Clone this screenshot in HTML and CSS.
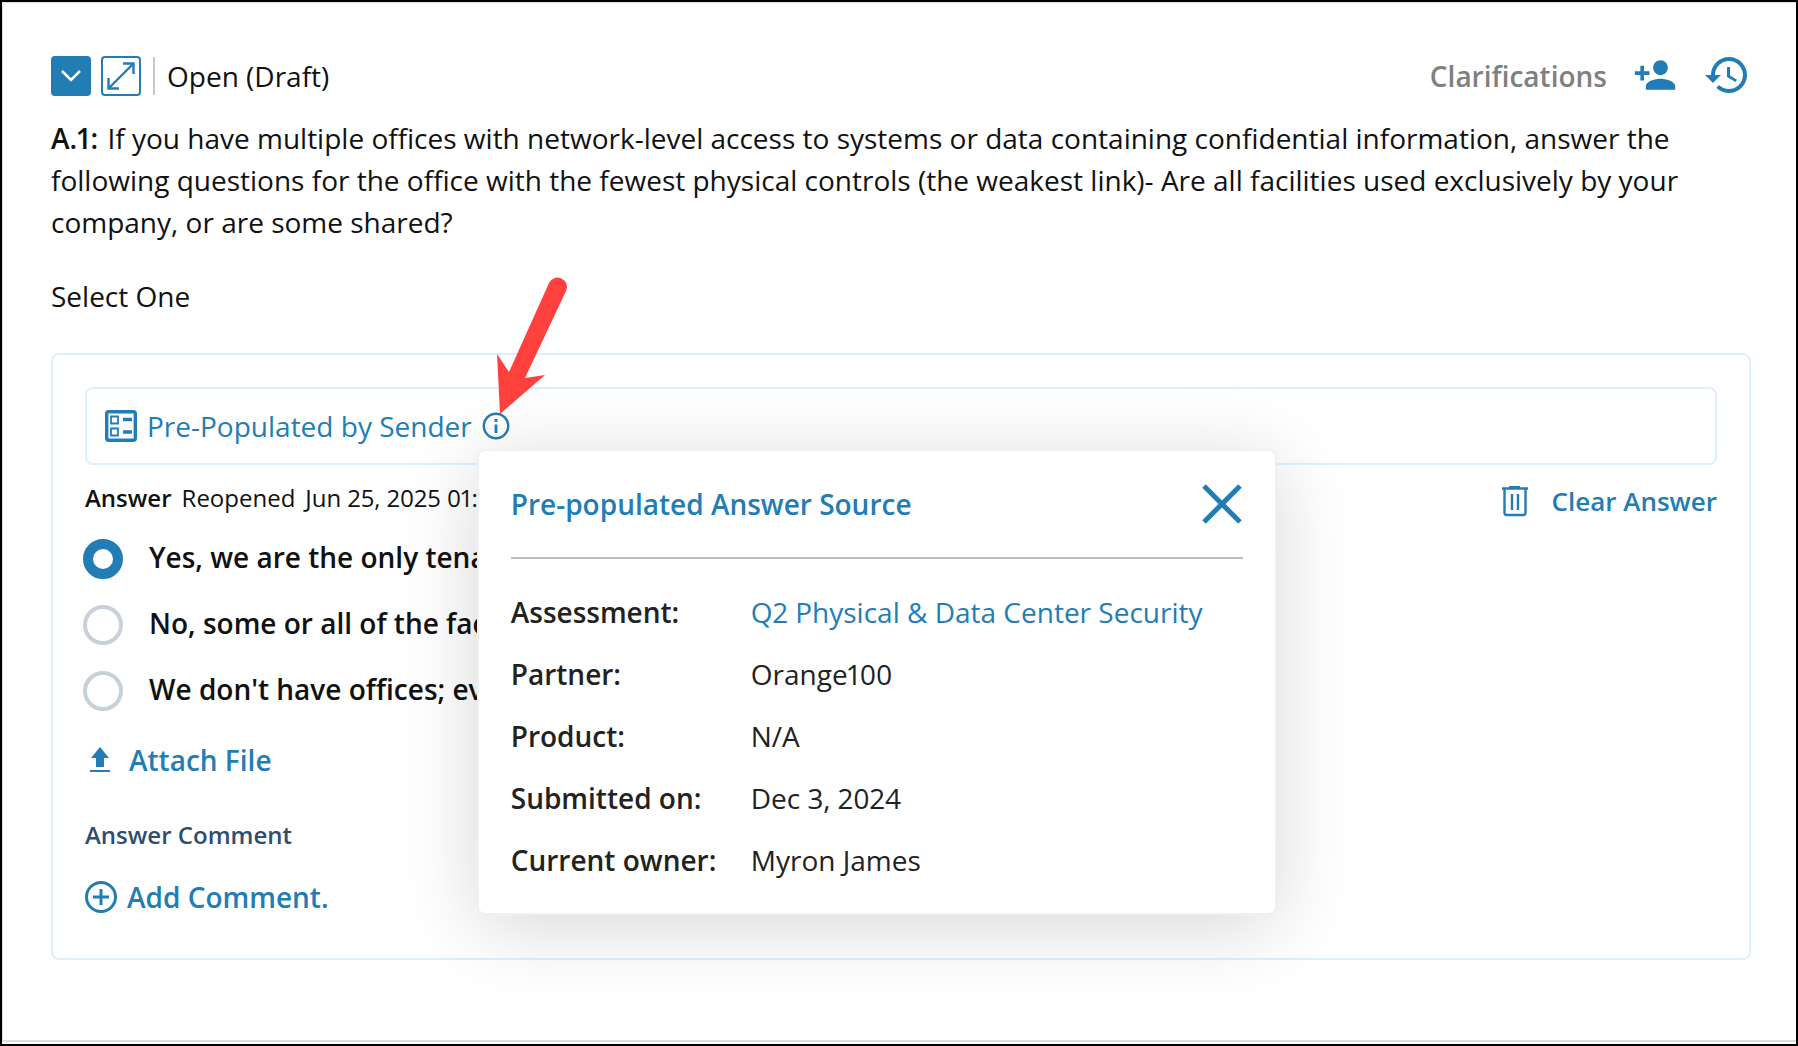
FILE: index.html
```html
<!DOCTYPE html>
<html lang="en">
<head>
    <meta charset="UTF-8">
    <meta name="viewport" content="width=device-width, initial-scale=1.0">
    <title>Assessment Question</title>
    <link rel="stylesheet" href="styles.css">
</head>
<body>
    <main class="card">
        <header class="header">
            <button class="square filled" aria-label="Collapse">
                <svg width="20" height="12" viewBox="0 0 20 12"><path d="M1 1l9 9 9-9" fill="none" stroke="currentColor" stroke-width="2.500"/></svg>
            </button>
            <button class="square" aria-label="Expand">
                <svg width="28" height="28" viewBox="0 0 28 28"><path d="M1.500 26.500L26.500 1.500M16 1.500h10.500v10.500M1.500 16v10.500H12" fill="none" stroke="currentColor" stroke-width="2.400"/></svg>
            </button>
            <span class="divider"></span>
            <span class="status">Open (Draft)</span>
            <a href="#" class="clarifications">Clarifications</a>
            <button class="icon-button" aria-label="Add person">
                <svg width="44" height="44" viewBox="0 0 24 24"><path fill="currentColor" d="M15 12c2.210 0 4-1.790 4-4s-1.790-4-4-4-4 1.790-4 4 1.790 4 4 4zm-9-2V7H4v3H1v2h3v3h2v-3h3v-2H6zm9 4c-2.670 0-8 1.340-8 4v2h16v-2c0-2.660-5.330-4-8-4z"/></svg>
            </button>
            <button class="icon-button" aria-label="History">
                <svg width="48" height="48" viewBox="0 0 24 24"><path fill="currentColor" d="M13 3c-4.970 0-9 4.030-9 9H1l3.890 3.890.07.14L9 12H6c0-3.870 3.130-7 7-7s7 3.130 7 7-3.130 7-7 7c-1.930 0-3.680-.79-4.940-2.060l-1.420 1.420C8.270 19.990 10.510 21 13 21c4.970 0 9-4.030 9-9s-4.030-9-9-9zm-1 5v5l4.280 2.540.72-1.210-3.500-2.080V8H12z"/></svg>
            </button>
        </header>

        <p class="question"><b>A.1:</b> If you have multiple offices with network-level access to systems or data containing confidential information, answer the following questions for the office with the fewest physical controls (the weakest link)- Are all facilities used exclusively by your company, or are some shared?</p>
        <p class="hint">Select One</p>

        <section class="answer-box">
            <div class="source">
                <svg width="32" height="32" viewBox="0 0 32 32">
                    <rect x="1.700" y="1.700" width="28.600" height="28.600" rx="2" fill="none" stroke="currentColor" stroke-width="3.400"/>
                    <path d="M6 6.500h7v7H6zM6 18.500h7v7H6z" fill="none" stroke="currentColor" stroke-width="1.800"/>
                    <path d="M18 9.500h9M18 22h9" stroke="currentColor" stroke-width="3.400"/>
                </svg>
                <span>Pre-Populated by Sender</span>
                <div class="info">
                    <button class="icon-button" aria-label="Answer source info">
                        <svg width="28" height="28" viewBox="0 0 28 28"><circle cx="14" cy="14" r="12.200" fill="none" stroke="currentColor" stroke-width="2.400"/><path d="M14 7v3M14 12.500v8.500" stroke="currentColor" stroke-width="2.800"/></svg>
                    </button>
                    <svg class="pointer" width="72" height="138" viewBox="0 0 72 138"><path d="M4 137L1 77l12 18L53 6a9 9 0 0 1 17 8L29 101l20-3z" fill="#ff413d"/></svg>

                    <div class="popup" role="dialog" aria-labelledby="popup-title">
                        <div class="popup-head">
                            <h2 id="popup-title">Pre-populated Answer Source</h2>
                            <button class="icon-button" aria-label="Close">
                                <svg width="42" height="42" viewBox="0 0 42 42"><path d="M3 3l36 36M39 3L3 39" stroke="currentColor" stroke-width="5"/></svg>
                            </button>
                        </div>
                        <dl>
                            <dt>Assessment:</dt><dd><a href="#">Q2 Physical &amp; Data Center Security</a></dd>
                            <dt>Partner:</dt><dd>Orange100</dd>
                            <dt>Product:</dt><dd>N/A</dd>
                            <dt>Submitted on:</dt><dd>Dec 3, 2024</dd>
                            <dt>Current owner:</dt><dd>Myron James</dd>
                        </dl>
                    </div>
                </div>
            </div>

            <div class="answer-row">
                <p class="answer-meta"><b>Answer</b><span>Reopened</span><span>Jun 25, 2025 01:15</span></p>
                <button class="link-button clear">
                    <svg width="28" height="32" viewBox="0 0 28 32"><path d="M8 1h11v2H8z" fill="currentColor"/><path d="M1 3.500h26M3.500 3.500v24q0 2.500 2 2.500h17q2 0 2-2.500v-24M11 9v16M17 9v16" fill="none" stroke="currentColor" stroke-width="2.400"/></svg>
                    Clear Answer
                </button>
            </div>

            <div class="options" role="radiogroup" aria-label="Select One">
                <label><input type="radio" name="tenancy" checked> Yes, we are the only tenant</label>
                <label><input type="radio" name="tenancy"> No, some or all of the facilities are shared</label>
                <label><input type="radio" name="tenancy"> We don't have offices; everyone is remote</label>
            </div>

            <button class="link-button attach">
                <svg width="20" height="26" viewBox="0 0 20 26"><path d="M10 0l9 11h-5v9H6v-9H1zM0 23h20v2H0z" fill="currentColor"/></svg>
                Attach File
            </button>

            <h3>Answer Comment</h3>
            <button class="link-button comment">
                <svg width="32" height="32" viewBox="0 0 32 32"><path d="M16 8v16M8 16h16" stroke="currentColor" stroke-width="3"/><circle cx="16" cy="16" r="14.500" fill="none" stroke="currentColor" stroke-width="3"/></svg>
                Add Comment.
            </button>
        </section>
    </main>
</body>
</html>
```

FILE: styles.css
```css
* { box-sizing: border-box; }
body {
    margin: 0;
    min-height: 100vh;
    display: flex;
    border: 2px solid #000;
    background: #fff;
    color: #111;
    font: 28px/42px "Open Sans", "Noto Sans", sans-serif;
    font-variant-numeric: proportional-nums;
}
p, h2, h3, dl, dd { margin: 0; }
b, dt, h2, h3 { font-weight: 600; }
a { color: #227db5; text-decoration: none; }
svg { display: block; flex: none; }
button { font: inherit; color: #227db5; background: none; border: 0; padding: 0; cursor: pointer; }

.card {
    flex: 1;
    margin-bottom: 2px;
    padding: 53px 45px 32px 48px;
    border: 1px solid #ddd;
    border-right: 0;
    border-bottom-width: 2px;
    border-radius: 4px 0 0 0;
}

/* Header */
.header { display: flex; align-items: center; height: 40px; margin-bottom: 21px; }
.square {
    display: flex;
    align-items: center;
    justify-content: center;
    width: 40px;
    height: 40px;
    margin-right: 10px;
    border: 2px solid #227db5;
    border-radius: 4px;
}
.filled { background: #227db5; color: #fff; }
.divider { width: 2px; height: 38px; margin: 0 12px 0 2px; background: #c8c8c8; }
.clarifications { margin-left: auto; margin-right: 26px; color: #808080; font-weight: 600; }
.icon-button { display: block; flex: none; }
.header .icon-button { margin-bottom: 2px; }
.header .icon-button + .icon-button { margin-left: 26px; }

.question { margin-bottom: 32px; }
.question b { margin-right: 2px; }
.hint { margin-bottom: 36px; }

/* Answer */
.answer-box { padding: 32px 32px 45px; border: 2px solid #e1effd; border-radius: 8px; }
.source {
    display: flex;
    align-items: center;
    gap: 10px;
    height: 78px;
    padding: 0 18px;
    border: 2px solid #e1effd;
    border-radius: 8px;
    color: #227db5;
}
.info { position: relative; }
.answer-row { display: flex; justify-content: space-between; align-items: flex-start; margin: 15px 0 17px; }
.answer-meta { display: flex; gap: 10px; font-size: 24px; line-height: 36px; }
.link-button { display: flex; align-items: center; font-weight: 600; }
.clear { gap: 22px; font-size: 26px; }

.options { display: grid; gap: 26px; margin-left: -2px; }
.options label { display: flex; gap: 26px; height: 40px; line-height: 36px; font-weight: 600; }
.options input {
    appearance: none;
    flex: none;
    width: 40px;
    height: 40px;
    margin: 0;
    border: 4px solid #c8d0d9;
    border-radius: 50%;
    background: #fff;
}
.options input:checked { border: 10px solid #227db5; }
.attach { gap: 19px; margin: 28px 0 36px 5px; }
h3 { margin-bottom: 28px; font-size: 24px; line-height: 36px; color: #2f4d70; }
.comment { gap: 10px; line-height: 32px; }

/* Popup */
.pointer { position: absolute; left: 14px; bottom: 25px; z-index: 2; }
.popup {
    position: absolute;
    top: 37px;
    left: -5px;
    z-index: 1;
    width: 800px;
    padding: 32px 32px 22px;
    border: 2px solid #f0f0f0;
    border-radius: 8px;
    background: #fff;
    color: #222;
    box-shadow: 0 12px 80px rgba(0, 0, 0, 0.16);
}
.popup-head {
    display: flex;
    justify-content: space-between;
    align-items: center;
    padding-bottom: 32px;
    border-bottom: 2px solid #bbb;
}
h2 { font-size: 28px; color: #227db5; }
dl { display: grid; grid-template-columns: 240px 1fr; row-gap: 20px; padding: 32px 0 10px; }
```
